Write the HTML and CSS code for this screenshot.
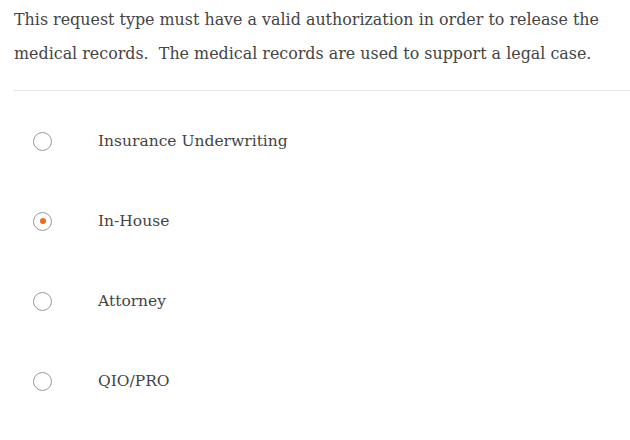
FILE: index.html
```html
<!DOCTYPE html>
<html>
<head>
<meta charset="utf-8">
<link rel="stylesheet" href="styles.css">
</head>
<body>
<div class="page">
  <p class="intro">This request type must have a valid authorization in order to release the medical records.&nbsp; The medical records are used to support a legal case.</p>
  <hr class="sep">
  <ul class="options">
    <li class="option"><span class="radio"></span><span class="label">Insurance Underwriting</span></li>
    <li class="option"><span class="radio checked"></span><span class="label">In-House</span></li>
    <li class="option"><span class="radio"></span><span class="label">Attorney</span></li>
    <li class="option"><span class="radio"></span><span class="label">QIO/PRO</span></li>
  </ul>
</div>
</body>
</html>
```
FILE: styles.css
```css
html, body {
  margin: 0;
  padding: 0;
  background: #fff;
}
.page {
  padding: 0 0 0 13px;
  font-family: "DejaVu Serif", "Liberation Serif", serif;
  color: #444;
}
.intro {
  margin: 0;
  padding: 3px 0 0 1px;
  font-size: 15.9px;
  line-height: 34px;
  width: 610px;
}
.sep {
  border: 0;
  border-top: 1px solid #e6e6e6;
  margin: 19px 0 0 0;
  height: 0;
}
.options {
  list-style: none;
  margin: 0;
  padding: 10px 0 0 0;
}
.option {
  display: flex;
  align-items: center;
  height: 80px;
}
.radio {
  width: 19px;
  height: 19px;
  box-sizing: border-box;
  border: 1px solid #9a9a9a;
  border-radius: 50%;
  margin-left: 20px;
  display: flex;
  align-items: center;
  justify-content: center;
}
.radio.checked::after {
  content: "";
  width: 6px;
  height: 6px;
  border-radius: 50%;
  background: #f26a21;
}
.label {
  margin-left: 46px;
  font-size: 15.5px;
  color: #444;
}
```
